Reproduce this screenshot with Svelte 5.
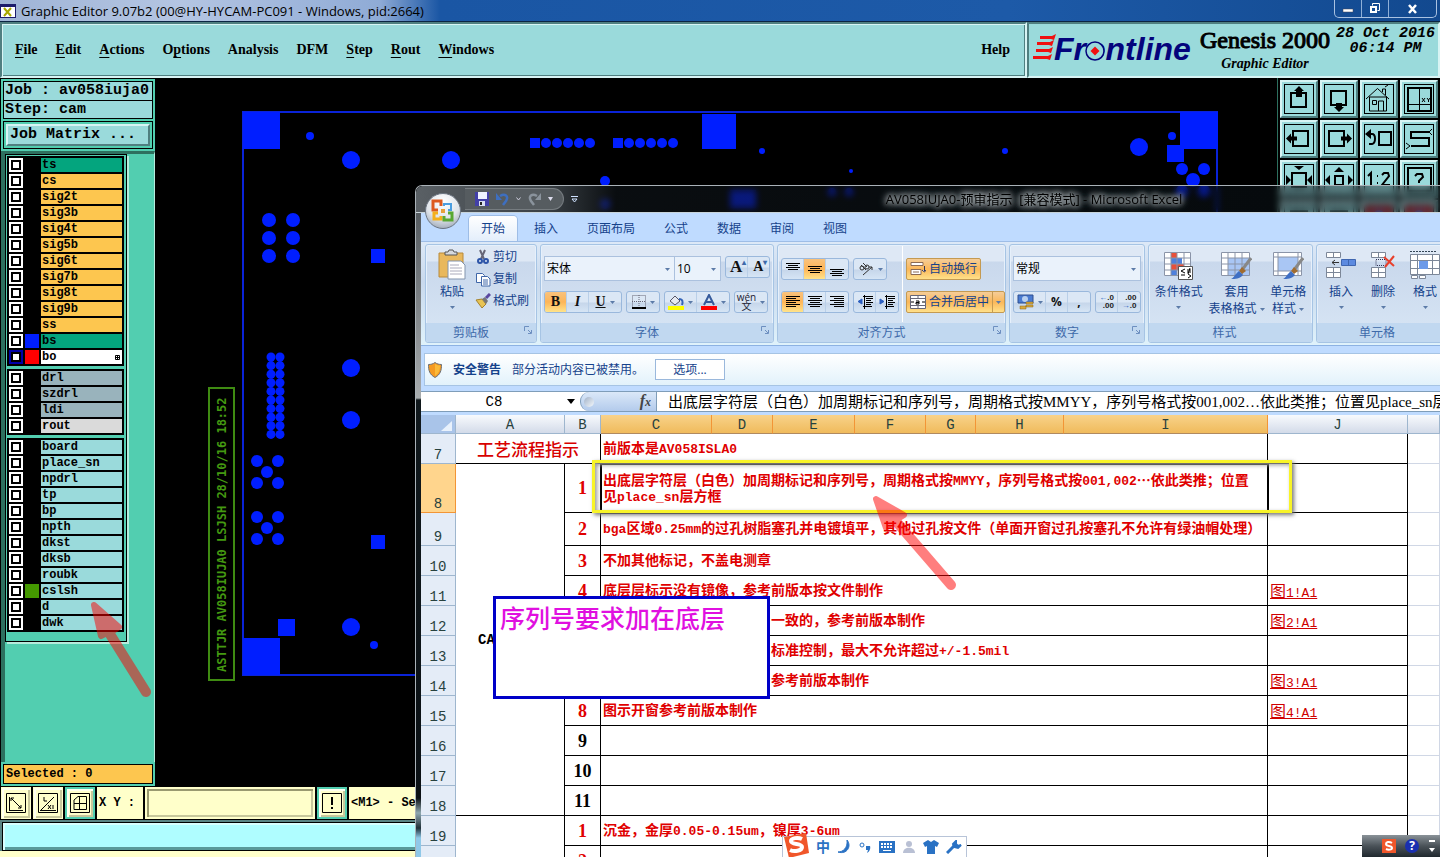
<script>
  const menus = [
    { key: 'F', rest: 'ile' },
    { key: 'E', rest: 'dit' },
    { key: 'A', rest: 'ctions' },
    { pre: 'O', key: 'p', rest: 'tions' },
    { rest: 'Analysis' },
    { rest: 'DFM' },
    { key: 'S', rest: 'tep' },
    { key: 'R', rest: 'out' },
    { key: 'W', rest: 'indows' },
  ];

  const layerGroups = [
    [
      { name: 'ts', kind: 'mask' },
      { name: 'cs', kind: 'signal' },
      { name: 'sig2t', kind: 'signal' },
      { name: 'sig3b', kind: 'signal' },
      { name: 'sig4t', kind: 'signal' },
      { name: 'sig5b', kind: 'signal' },
      { name: 'sig6t', kind: 'signal' },
      { name: 'sig7b', kind: 'signal' },
      { name: 'sig8t', kind: 'signal' },
      { name: 'sig9b', kind: 'signal' },
      { name: 'ss', kind: 'signal' },
      { name: 'bs', kind: 'mask', swatch: 'blue' },
      { name: 'bo', kind: 'plain', swatch: 'red', active: true },
    ],
    [
      { name: 'drl', kind: 'drill' },
      { name: 'szdrl', kind: 'drill' },
      { name: 'ldi', kind: 'drill' },
      { name: 'rout', kind: 'rout' },
    ],
    [
      { name: 'board', kind: 'misc' },
      { name: 'place_sn', kind: 'misc' },
      { name: 'npdrl', kind: 'misc' },
      { name: 'tp', kind: 'misc' },
      { name: 'bp', kind: 'misc' },
      { name: 'npth', kind: 'misc' },
      { name: 'dkst', kind: 'misc' },
      { name: 'dksb', kind: 'misc' },
      { name: 'roubk', kind: 'misc' },
      { name: 'cslsh', kind: 'misc', swatch: 'green' },
      { name: 'd', kind: 'misc' },
      { name: 'dwk', kind: 'misc' },
    ],
  ];

  // board pads: [cx, cy, r]
  const pads = [
    [310, 136, 4], [351, 160, 9], [451, 160, 9], [762, 151, 3], [605, 181, 5], [605, 204, 5],
    [851, 171, 2], [1005, 151, 3], [1139, 147, 9], [1172, 136, 4], [1182, 169, 6], [1204, 169, 6],
    [1193, 180, 7], [1182, 191, 6], [1204, 191, 6], [832, 192, 4], [849, 192, 4],
    [351, 368, 9], [351, 420, 9], [351, 627, 9], [374, 645, 4],
    ...[220, 238, 256].flatMap((y) => [[269, y, 7], [293, y, 7]]),
    ...[472, 528].flatMap((y) => [
      [257, y - 11, 6], [278, y - 11, 6], [267, y, 6], [257, y + 11, 6], [278, y + 11, 6],
    ]),
    ...[0, 1, 2, 3, 4].flatMap((i) => [[546 + i * 11, 143, 5], [629 + i * 11, 143, 5]]),
    ...Array.from({ length: 10 }, (_, i) => 357 + i * 8.6).flatMap((y) => [[271, y, 4.5], [280, y, 4.5]]),
  ];

  // square pads: [x, y, width, height]
  const squares = [
    [243, 112, 37, 37], [702, 114, 34, 35], [1180, 112, 38, 37], [243, 638, 37, 37],
    [1167, 145, 17, 17], [278, 619, 17, 17], [371, 249, 14, 14], [371, 535, 14, 14],
    [530, 138, 10, 10], [613, 138, 10, 10], [730, 190, 26, 18],
  ];

  const tools = ['up', 'down', 'home', 'xy', 'left', 'right', 'back', 'snake', 'in', 'out', 'half', 'help', 'fill', 'copy', 'stop', 'stop2'];

  const tabs = ['开始', '插入', '页面布局', '公式', '数据', '审阅', '视图'];

  const columns = ['A', 'B', 'C', 'D', 'E', 'F', 'G', 'H', 'I', 'J', ''];

  const rows = [
    { n: 8, no: '1', text: '出底层字符层（白色）加周期标记和序列号，周期格式按MMYY，序列号格式按001,002…依此类推；位置\n见place_sn层方框', tall: true },
    { n: 9, no: '2', text: 'bga区域0.25mm的过孔树脂塞孔并电镀填平，其他过孔按文件（单面开窗过孔按塞孔不允许有绿油帽处理）', mid: true },
    { n: 10, no: '3', text: '不加其他标记，不盖电测章' },
    { n: 11, no: '4', text: '底层层标示没有镜像，参考前版本按文件制作', link: '图1!A1' },
    { n: 12, no: '', text: '一致的，参考前版本制作', link: '图2!A1', tail: true },
    { n: 13, no: '', text: '标准控制，最大不允许超过+/-1.5mil', tail: true },
    { n: 14, no: '', text: '参考前版本制作', link: '图3!A1', tail: true },
    { n: 15, no: '8', text: '图示开窗参考前版本制作', link: '图4!A1' },
    { n: 16, no: '9', text: '', dark: true },
    { n: 17, no: '10', text: '', dark: true },
    { n: 18, no: '11', text: '', dark: true },
    { n: 19, no: '1', text: '沉金，金厚0.05-0.15um，镍厚3-6um' },
    { n: 20, no: '2', text: '' },
  ];

  function runs(text) {
    return text.split(/([\x20-\x7e]+)/).filter(Boolean);
  }

  const isLatin = (s) => /^[\x20-\x7e]/.test(s);
</script>

{#snippet mixed(text)}
  {#each runs(text) as run}{#if isLatin(run)}<span class="latin">{run}</span>{:else}{run}{/if}{/each}
{/snippet}

{#snippet caret()}
  <svg class="caret" width="5" height="3" viewBox="0 0 5 3"><path d="M0 0h5L2.5 3z" fill="#5c7ba8" /></svg>
{/snippet}

{#snippet launcher()}
  <button class="launcher" aria-label="More options">
    <svg width="8" height="8" viewBox="0 0 8 8" fill="none" stroke="#6d8fc0">
      <path d="M.5 5V.5H5M4 4l3 3" /><path d="M7.500 4v3.500H4" />
    </svg>
  </button>
{/snippet}

{#snippet lines(y, widths, x)}
  <svg width="16" height="16" viewBox="0 0 16 16" stroke="#000">
    {#each widths as w, i}
      <path d="M{x === 'l' ? 1 : x === 'r' ? 15 - w : 8 - w / 2} {y + i * 2 + 0.5}h{w}" />
    {/each}
  </svg>
{/snippet}

{#snippet tool(kind)}
  <svg width="32" height="32" viewBox="0 0 32 32" fill="none" stroke="#000" stroke-width="2">
    <rect x="1.5" y="1.5" width="29" height="29" stroke-width="1" />
    {#if kind === 'up'}
      <path d="M8 10h15v14H8z" /><path d="M16 3l5 5h-2v6h-6V8h-2z" fill="#000" stroke="none" />
    {:else if kind === 'down'}
      <path d="M8 8h15v14H8z" /><path d="M16 29l5-5h-2v-4h-6v4h-2z" fill="#000" stroke="none" />
    {:else if kind === 'left'}
      <path d="M10 8h15v15H10z" /><path d="M3 15.500l5-5v3h6v4H8v3z" fill="#000" stroke="none" />
    {:else if kind === 'right'}
      <path d="M6 8h15v15H6z" /><path d="M29 15.500l-5-5v3h-6v4h6v3z" fill="#000" stroke="none" />
    {:else if kind === 'home'}
      <g stroke-width="1"><path d="M3 16L14.500 5.500 26 16M6.500 14v14h17V14M6 14h18M9.500 17.500h4v4h-4zM15.500 28v-10h5v10M19.500 9V6h3v6M22 4l3-2" /></g>
    {:else if kind === 'xy'}
      <path d="M5 5h23v23H5z" /><path d="M16.500 5v23M5 21.500h23" stroke-width="1" />
      <path d="M19 15l3 4M22 15l-3 4M24 15l1.500 2 1.500-2M25.500 17v2" stroke-width="1" />
    {:else if kind === 'back'}
      <path d="M16 9h12v13H16zM4 11h5c4 0 4 9 0 10H6" /><path d="M8 6l-6 5 6 5z" fill="#000" stroke="none" />
    {:else if kind === 'snake'}
      <path d="M26 9H8v6h18v8H8" /><path d="M29 6l-3 3 3 3M3 20l4 3-4 3" stroke-width="1" />
    {:else if kind === 'in'}
      <path d="M9 10h14v14H9z" /><path d="M16 7l-5-4h10zM8 17l-5-5v10zM24 17l5-5v10z" fill="#000" stroke="none" />
    {:else if kind === 'out'}
      <path d="M12 13h8v9h-8z" /><path d="M16 4l-5 5h10zM2 17l5-5v10zM30 17l-5-5v10z" fill="#000" stroke="none" />
    {:else if kind === 'half'}
      <path d="M5 13l3-3v13M14 13h1M14 20h1M19 12l2-2h4l1 3-7 9h8" />
    {:else if kind === 'help'}
      <path d="M5 5h23v23H5zM12 13l2-2h5l1 3-4 4v2" />
    {:else if kind === 'fill' || kind === 'copy'}
      <path d="M8 8h16v16H8z" />
    {:else}
      <path d="M2 2h28v28H2z" fill="#a33b46" stroke="none" /><circle cx="16" cy="13" r="5" stroke="#4a6bd8" />
    {/if}
  </svg>
{/snippet}

<div class="desktop">
  <header class="title-bar">
    <svg width="16" height="14" viewBox="0 0 16 14">
      <path d="M0 0h16v14H0z" fill="#1c1c6c" /><path d="M1 3h14v10H1z" fill="#fff" />
      <path d="M4 4l7 8M11 4l-7 8" stroke="#a8a800" stroke-width="2" />
    </svg>
    <span class="title-text">Graphic Editor 9.07b2 (00@HY-HYCAM-PC091 - Windows, pid:2664)</span>
    <div class="caption-buttons">
      <button aria-label="Minimize"><svg width="12" height="10" viewBox="0 0 12 10"><path d="M1 5h10v3H1z" fill="#fff" stroke="#445" stroke-width=".5" /></svg></button>
      <button aria-label="Restore"><svg width="12" height="11" viewBox="0 0 12 11" fill="none" stroke="#fff"><path d="M3.500 2.500v-2h7v7h-2" /><path d="M2 4h5v5H2z" stroke-width="2" /></svg></button>
      <button class="close" aria-label="Close"><svg width="12" height="10" viewBox="0 0 12 10"><path d="M2 1l7 8M9 1L2 9" stroke="#fff" stroke-width="2.500" /></svg></button>
    </div>
  </header>

  <div class="top-row">
    <nav class="menu-bar">
      {#each menus as m}
        <button>{m.pre ?? ''}{#if m.key}<u>{m.key}</u>{/if}{m.rest}</button>
      {/each}
      <button class="help">Help</button>
    </nav>
    <div class="brand">
      <svg class="logo" width="162" height="34" viewBox="0 0 162 34" role="img" aria-label="Frontline">
        <path d="M7 3h12l4-2-2 6-3-1H7zM4 9h13l4-2-2 6-3-1H4zM3 16h13l4-2-2 6-3-1H3zM0 23h15l4-2-2 6-3-1H0z" fill="#f01010" />
        <text x="21" y="27" class="logo-text">Frontline</text>
        <circle cx="62" cy="18" r="9" fill="#9adadb" stroke="#04047c" stroke-width="1.5" />
        <path d="M62 13.500l4.500 4.500-4.500 4.500-4.500-4.500z" fill="#f01010" />
      </svg>
      <div class="product">
        <div class="product-name">Genesis 2000</div>
        <div class="product-sub">Graphic Editor</div>
      </div>
      <div class="clock">28 Oct 2016<br />06:14 PM</div>
    </div>
  </div>

  <div class="work-row">
    <aside class="sidebar">
      <div class="job-info">
        <div>Job : av058iuja0</div>
        <div>Step: cam</div>
      </div>
      <div class="matrix-frame"><button>Job Matrix ...</button></div>
      <div class="layer-area">
        <div class="layer-panel">
          {#each layerGroups as group}
            <div class="layer-group">
              {#each group as layer}
                <div class="layer">
                  <input type="checkbox" id="layer-{layer.name}" class:active={layer.active} />
                  <span class="swatch {layer.swatch ?? ''}"></span>
                  <label class={layer.kind} for="layer-{layer.name}">
                    {layer.name}
                    {#if layer.active}
                      <svg width="5" height="5" viewBox="0 0 5 5" fill="none" stroke="#000"><path d="M.5 .5h4v4h-4zM2.500 0v5M0 2.500h5" /></svg>
                    {/if}
                  </label>
                </div>
              {/each}
            </div>
          {/each}
        </div>
      </div>
      <div class="selected">Selected : 0</div>
    </aside>

    <main class="canvas">
      <svg width="1123" height="708" viewBox="155 78 1123 708">
        <g fill="#001eff">
          <rect x="243" y="112" width="974" height="563" fill="none" stroke="#0a23d8" stroke-width="2" />
          {#each squares as [x, y, width, height]}
            <rect {x} {y} {width} {height} />
          {/each}
          {#each pads as [cx, cy, r]}
            <circle {cx} {cy} {r} />
          {/each}
        </g>
        <rect x="209" y="388" width="25" height="292" fill="none" stroke="#3f8b12" stroke-width="2" />
        <text class="board-text" transform="translate(226 672) rotate(-90)">ASTTJR AV058IUJA0 LSJSH 28/10/16 18:52</text>
      </svg>
    </main>

    <div class="tool-grid">
      {#each tools as t}
        <button aria-label={t}>{@render tool(t)}</button>
      {/each}
    </div>
  </div>

  <div class="status-row">
    <button aria-label="Diagonal"><svg width="22" height="22" viewBox="0 0 22 22" fill="none" stroke="#000"><path d="M1.500 1.500h19v19h-19zM4.500 5v13M4 18.500h14M6 6l10 10M6 9V6h3M16 13v3h-3" /></svg></button>
    <button aria-label="Angle"><svg width="22" height="22" viewBox="0 0 22 22" fill="none" stroke="#000"><path d="M1.500 1.500h19v19h-19zM3 18.500h16M4 18L17 5M7 5v4h3M11 13l3 4M14 13l-3 4M16 13v4" /></svg></button>
    <button class="framed" aria-label="Grid"><svg width="22" height="22" viewBox="0 0 22 22" fill="none" stroke="#000"><path d="M1.500 1.500h19v19h-19zM5 17.500V8l4-3.500h8.500v13zM10.500 4v14M5 11.500h13" /></svg></button>
    <label for="xy">X Y :</label>
    <input id="xy" type="text" />
    <button class="framed" aria-label="Apply"><svg width="22" height="22" viewBox="0 0 22 22" fill="none" stroke="#000"><path d="M1.500 1.500h19v19h-19z" /><path d="M11 5v8M11 15v2" stroke-width="2" /></svg></button>
    <span class="hint">&lt;M1&gt; - Select</span>
  </div>
  <div class="message-bar"><div></div></div>

  <svg class="arrow" width="70" height="104" viewBox="0 0 70 104">
    <g opacity=".5" fill="#f00" stroke="#f00" stroke-linejoin="round" stroke-linecap="round">
      <path d="M8 6l25 22-6 4-8 3-4 2z" stroke-width="6" /><path d="M22 32l38 61" stroke-width="10" />
    </g>
  </svg>

  <section class="excel">
    <header class="excel-title">
      <button class="orb" aria-label="Office">
        <svg width="36" height="36" viewBox="0 0 36 36">
          <defs><radialGradient id="orb" cx=".5" cy=".25" r=".8"><stop offset="0" stop-color="#fff" /><stop offset=".6" stop-color="#dfe4ea" /><stop offset="1" stop-color="#9aa5b4" /></radialGradient></defs>
          <circle cx="18" cy="18" r="17.500" fill="url(#orb)" stroke="#6b7480" />
          <g fill="none" stroke-width="3">
            <path d="M16 13V8H8v9h5" stroke="#dd5a20" /><path d="M19 13v-2h7v6h-3" stroke="#4b9ee0" stroke-width="2" />
            <path d="M13 20H9v6h7v-3" stroke="#f4b01c" /><path d="M19 23v4h8v-7h-4" stroke="#58a832" />
          </g>
          <path d="M16 16h4v4h-4z" fill="#e7a13a" />
        </svg>
      </button>
      <div class="quick">
        <button aria-label="Save"><svg width="14" height="14" viewBox="0 0 14 14"><path d="M0 0h14v14H0z" fill="#4240a8" /><path d="M3 0h9v7H3z" fill="#eef2ff" /><path d="M4 9h6v5H4z" fill="#d8def0" /><path d="M5 10h2v3H5z" fill="#222" /></svg></button>
        <button aria-label="Undo"><svg width="13" height="14" viewBox="0 0 13 14"><path d="M4 4c5-3 9 0 6 5l-3 4" fill="none" stroke="#3e6fc0" stroke-width="2.500" /><path d="M0 1v7h6z" fill="#3e6fc0" /></svg></button>
        <svg width="5" height="4" viewBox="0 0 5 4"><path d="M.5 .5L2.500 3l2-2.500" fill="none" stroke="#ccd" /></svg>
        <button aria-label="Redo"><svg width="13" height="14" viewBox="0 0 13 14"><path d="M9 4C4 1 0 4 3 9l3 4" fill="none" stroke="#8a939c" stroke-width="2.500" /><path d="M13 1v7H7z" fill="#8a939c" /></svg></button>
        <svg width="5" height="4" viewBox="0 0 5 4"><path d="M0 0h5L2.500 4z" fill="#dde" /></svg>
      </div>
      <svg class="more" width="7" height="7" viewBox="0 0 7 7" fill="none" stroke="#cfe2ff"><path d="M0 .5h7M1 3l2.500 3L6 3z" /></svg>
      <span class="excel-name">AV058IUJA0-预审指示&nbsp; [兼容模式] - Microsoft Excel</span>
    </header>

    <div class="excel-body">
      <nav class="tabs">
        {#each tabs as tab, i}
          <button class:current={i === 0}>{tab}</button>
        {/each}
      </nav>

      <div class="ribbon">
        <div class="group clipboard">
          <div class="group-main">
            <button class="big">
              <svg width="28" height="32" viewBox="0 0 28 32">
                <path d="M1 4h24v24H1z" fill="#e9b85c" stroke="#b98a3a" /><path d="M7 5V3h3l1-2h4l1 2h3v3H7z" fill="#d5d9de" stroke="#555" />
                <path d="M10 12h13l4 4v14H10z" fill="#fff" stroke="#8294ad" /><path d="M12 16h9M12 19h12M12 22h12M12 25h12" stroke="#aab" />
              </svg>
              <span>粘贴</span>
              {@render caret()}
            </button>
            <div class="stack">
              <button><svg width="16" height="16" viewBox="0 0 16 16" fill="none"><path d="M5 1l4 9M10 1L6 10" stroke="#667" stroke-width="2" /><circle cx="5" cy="12" r="2" stroke="#2d54a8" stroke-width="2" /><circle cx="11" cy="12" r="2" stroke="#2d54a8" stroke-width="2" /></svg>剪切</button>
              <button><svg width="16" height="16" viewBox="0 0 16 16" fill="#fff" stroke="#3f66a8"><path d="M1.500 2.500h6l2 2v7h-8z" /><path d="M6.500 5.500h6l2.500 2.500v7H6.500zM8 9h5M8 11h5M8 13h5" /></svg>复制</button>
              <button><svg width="16" height="16" viewBox="0 0 16 16"><path d="M1 7l6-1 4 5-4 4z" fill="#e8c455" stroke="#a5822e" /><path d="M7 6l3-2 3 4-2 3z" fill="#777" /><path d="M11 5l4-4" stroke="#5a48a0" stroke-width="3" /></svg>格式刷</button>
            </div>
          </div>
          <div class="group-label"><span>剪贴板</span>{@render launcher()}</div>
        </div>

        <div class="group font">
          <div class="group-main rows">
            <div class="line">
              <div class="combos">
                <label class="combo family"><select aria-label="Font"><option>宋体</option></select>{@render caret()}</label>
                <label class="combo size"><select aria-label="Font size"><option>10</option></select>{@render caret()}</label>
              </div>
              <div class="cluster">
                <button class="letter grow">A<sup>▴</sup></button><button class="letter shrink">A<sup>▾</sup></button>
              </div>
            </div>
            <div class="line">
              <div class="cluster">
                <button class="letter on">B</button><button class="letter italic">I</button><button class="letter wide"><u>U</u>{@render caret()}</button>
              </div>
              <div class="cluster">
                <button class="wide" aria-label="Borders"><svg width="14" height="14" viewBox="0 0 14 14"><path d="M.5 .5h13v12H.5zM7 0v13M0 6.500h14" fill="none" stroke="#667" stroke-dasharray="1 1" /><path d="M0 13h14" stroke="#000" stroke-width="2" /></svg>{@render caret()}</button>
              </div>
              <div class="cluster">
                <button class="wide" aria-label="Fill colour"><svg width="16" height="16" viewBox="0 0 16 16"><path d="M2 7l5-5 5 5-5 4z" fill="#e6eaf2" stroke="#556" /><path d="M11 5c4 0 4 3 3 6" fill="none" stroke="#3565b8" stroke-width="2" /><path d="M0 12h16v4H0z" fill="#ff0" /></svg>{@render caret()}</button>
                <button class="wide" aria-label="Font colour"><svg width="16" height="16" viewBox="0 0 16 16"><path d="M3 11L8 1l5 10M5 8h6" fill="none" stroke="#355a9c" stroke-width="2" /><path d="M0 12h16v4H0z" fill="#f00" /></svg>{@render caret()}</button>
              </div>
              <div class="cluster">
                <button class="wide phonetic"><span>wén<br />文</span>{@render caret()}</button>
              </div>
            </div>
          </div>
          <div class="group-label"><span>字体</span>{@render launcher()}</div>
        </div>

        <div class="group align">
          <div class="group-main split">
            <div class="align-col">
              <div class="line">
                <div class="cluster">
                  <button aria-label="Top">{@render lines(2, [14, 10, 14, 10], 'c')}</button><button class="on" aria-label="Middle">{@render lines(5, [14, 10, 14, 10], 'c')}</button><button aria-label="Bottom">{@render lines(8, [14, 10, 14, 10], 'c')}</button>
                </div>
                <div class="cluster">
                  <button class="wide" aria-label="Orientation"><svg width="16" height="16" viewBox="0 0 16 16" fill="none" stroke="#333"><circle cx="4" cy="7" r="2" /><path d="M3 4l5 5" /><circle cx="9" cy="6" r="2" /><path d="M5 2l4 4M5 14L14 6M14 9V6h-3" /></svg>{@render caret()}</button>
                </div>
              </div>
              <div class="line">
                <div class="cluster">
                  <button class="on" aria-label="Align left">{@render lines(2, [14, 10, 14, 10, 14, 10], 'l')}</button><button aria-label="Center">{@render lines(2, [14, 10, 14, 10, 14, 10], 'c')}</button><button aria-label="Align right">{@render lines(2, [14, 10, 14, 10, 14, 10], 'r')}</button>
                </div>
                <div class="cluster">
                  <button aria-label="Decrease indent"><svg width="16" height="16" viewBox="0 0 16 16" stroke="#000"><path d="M6 2.500h10M9 4.500h7M9 6.500h5M9 8.500h7M9 10.500h5M6 12.500h9M7.500 1v14" /><path d="M5 5L1 7.500 5 10z" fill="#2d5fc0" stroke="#2d5fc0" /></svg></button><button aria-label="Increase indent"><svg width="16" height="16" viewBox="0 0 16 16" stroke="#000"><path d="M6 2.500h10M9 4.500h7M9 6.500h5M9 8.500h7M9 10.500h5M6 12.500h9M7.500 1v14" /><path d="M1 5l4 2.500L1 10z" fill="#2d5fc0" stroke="#2d5fc0" /></svg></button>
                </div>
              </div>
            </div>
            <div class="align-col divided">
              <button class="gold"><svg width="16" height="16" viewBox="0 0 16 16" fill="#fff" stroke="#8a6a54"><path d="M1 1.500h12v3H1zM1 8.500h10v5H1zM3 11h6" /><path d="M14.500 5v5M12 9l2.500 2L16 9" stroke="#335" /></svg>自动换行</button>
              <button class="gold"><svg width="16" height="16" viewBox="0 0 16 16" fill="#fff" stroke="#667"><path d="M.5 1.500h15v13H.5zM8 1v3M8 12v3M0 4.500h16M0 11.500h16" /><path d="M4 8H1M12 8h3M6 7h3v3H6V8.500h3" stroke="#000" /></svg>合并后居中<i></i>{@render caret()}</button>
            </div>
          </div>
          <div class="group-label"><span>对齐方式</span>{@render launcher()}</div>
        </div>

        <div class="group number">
          <div class="group-main rows">
            <div class="line">
              <label class="combo format"><select aria-label="Number format"><option>常规</option></select>{@render caret()}</label>
            </div>
            <div class="line">
              <div class="cluster">
                <button class="wide" aria-label="Currency"><svg width="17" height="16" viewBox="0 0 17 16"><path d="M1 1h15v8H1z" fill="#4a7bd0" stroke="#2d4f90" /><circle cx="8" cy="5" r="3" fill="#b8d0f0" /><path d="M9 8h7v2H9zM9 11h7v2H9zM3 12h6v3H3z" fill="#d8a93c" stroke="#8a6518" stroke-width=".5" /></svg>{@render caret()}</button><button class="sign">%</button><button class="sign">,</button>
              </div>
              <div class="cluster">
                <button class="decimal"><span><b>←</b>.0<br />.00</span></button><button class="decimal"><span>.00<br /><b>→</b>.0</span></button>
              </div>
            </div>
          </div>
          <div class="group-label"><span>数字</span>{@render launcher()}</div>
        </div>

        <div class="group styles">
          <div class="group-main">
            <button class="big">
              <svg width="32" height="32" viewBox="0 0 32 32"><path d="M1 3h27v24H1z" fill="#fff" /><path d="M8 3h6v6H8zM8 15h6v6H8z" fill="#e8503a" /><path d="M8 9h11v6H8zM8 21h6v6H8z" fill="#4f80dc" /><path d="M14 15h7v6h-7z" fill="#e8503a" /><path d="M1.500 3.500h26v23h-26zM8 3v24M14 3v24M21 3v24M1 9h27M1 15h27M1 21h27" fill="none" stroke="#8a94a8" /><path d="M15.500 17.500h14v13h-14z" fill="#fff" stroke="#555" /><path d="M22 20l-4 2 4 2M18 26h4M24 21h4M24 23h4M27 19l-2 6M25 25l3 2-3 2" fill="none" stroke="#000" /></svg>
              <span>条件格式</span>{@render caret()}
            </button>
            <button class="big">
              <svg width="32" height="32" viewBox="0 0 32 32"><path d="M1 3h29v24H1z" fill="#fff" /><path d="M8 9h22v18H8z" fill="#a9c6f4" /><path d="M1.500 3.500h28v23h-28zM8 3v24M15 3v24M22 3v24M1 9h29M1 15h29M1 21h29" fill="none" stroke="#8a94a8" /><path d="M31 9l-9 12" stroke="#888" stroke-width="3" /><path d="M22 18l4 4-4 3-3-3z" fill="#a06c30" /><path d="M19 22l4 4c-3 4-8 4-12 4 3-1 4-5 8-8z" fill="#3f6fc4" /></svg>
              <span>套用<br />表格格式 {@render caret()}</span>
            </button>
            <button class="big">
              <svg width="32" height="32" viewBox="0 0 32 32"><path d="M1 3h29v24H1z" fill="#fff" /><path d="M6 8h20v14H6z" fill="#a9c6f4" /><path d="M1.500 3.500h28v23h-28zM6 3v24M26 3v24M1 8h29M1 22h29" fill="none" stroke="#8a94a8" /><path d="M31 9l-9 12" stroke="#888" stroke-width="3" /><path d="M22 18l4 4-4 3-3-3z" fill="#a06c30" /><path d="M19 22l4 4c-3 4-8 4-12 4 3-1 4-5 8-8z" fill="#3f6fc4" /></svg>
              <span>单元格<br />样式 {@render caret()}</span>
            </button>
          </div>
          <div class="group-label"><span>样式</span></div>
        </div>

        <div class="group cells">
          <div class="group-main">
            <button class="big">
              <svg width="32" height="32" viewBox="0 0 32 32" fill="#fff" stroke="#7c8798"><path d="M1.500 3.500h14v5h-14zM8.500 3v6M1.500 18.500h14v10h-14zM8.500 18v11M1 23.500h15" /><path d="M16.500 10.500h14v6h-14zM23.500 10v7" fill="#5c8ae0" stroke="#3f66b0" /><path d="M7 13.500h7M10 11l-3 2.500 3 2.500" fill="none" stroke="#333" /></svg>
              <span>插入</span>{@render caret()}
            </button>
            <button class="big">
              <svg width="32" height="32" viewBox="0 0 32 32" fill="#fff" stroke="#7c8798"><path d="M4.500 3.500h14v5h-14zM11.500 3v6M4.500 18.500h14v10h-14zM11.500 18v11M4 23.500h15" /><path d="M9 10.500h10v6H9z" fill="none" stroke-dasharray="1 1" stroke="#335" /><path d="M17 8l10 9M27 7l-9 11" stroke="#e8402c" stroke-width="2" /></svg>
              <span>删除</span>{@render caret()}
            </button>
            <button class="big">
              <svg width="32" height="32" viewBox="0 0 32 32" fill="#fff" stroke="#7c8798"><path d="M1.500 5.500h29v20h-29zM8.500 5v20M23.500 5v20M1 11.500h30M1 19.500h30M2.500 26.500h6v3h-6zM10.500 26.500h6v3h-6z" /><path d="M10 12h9v8h-9z" fill="#6c9ae8" stroke="none" /><path d="M1 2.500h27" stroke="#345" stroke-dasharray="2 1" /></svg>
              <span>格式</span>{@render caret()}
            </button>
          </div>
          <div class="group-label"><span>单元格</span></div>
        </div>
      </div>

      <div class="security">
        <svg width="14" height="16" viewBox="0 0 14 16"><path d="M7 .5c2 1.500 4 2 6.500 2 0 6-1 10-6.500 13C1.500 12.500.5 8.500.5 2.500 3 2.500 5 2 7 .5z" fill="#f59a22" stroke="#6a7078" /><path d="M7 2v12c4-3 5-6 5-10.500C10 3.500 8.500 3 7 2z" fill="#ffd24a" opacity=".6" /></svg>
        <strong>安全警告</strong>
        <span>部分活动内容已被禁用。</span>
        <button>选项...</button>
      </div>

      <div class="formula-bar">
        <div class="name-box"><input aria-label="Name box" value="C8" /><svg width="8" height="5" viewBox="0 0 8 5"><path d="M0 0h8L4 5z" /></svg></div>
        <div class="fx"><i></i><em>f<small>x</small></em></div>
        <input class="formula" aria-label="Formula" value="出底层字符层（白色）加周期标记和序列号，周期格式按MMYY，序列号格式按001,002…依此类推；位置见place_sn层方框" />
      </div>

      <table class="sheet">
        <colgroup>
          <col class="w-head" /><col class="w-a" /><col class="w-b" /><col class="w-c" /><col class="w-d" /><col class="w-e" /><col class="w-f" /><col class="w-g" /><col class="w-h" /><col class="w-i" /><col class="w-j" /><col />
        </colgroup>
        <thead>
          <tr>
            <th class="corner"><svg width="11" height="10" viewBox="0 0 11 10"><path d="M11 0v10H0z" fill="#e8f1fc" /></svg></th>
            {#each columns as c}
              <th class:picked={c >= 'C' && c <= 'I'}>{c}</th>
            {/each}
          </tr>
        </thead>
        <tbody>
          <tr>
            <th>7</th>
            <td colspan="2" class="process">工艺流程指示</td>
            <td colspan="7" class="note">{@render mixed('前版本是AV058ISLA0')}</td>
            <td></td>
            <td class="outside"></td>
          </tr>
          {#each rows as r}
            <tr class:tall={r.tall} class:mid={r.mid}>
              <th class:picked={r.tall}>{r.n}</th>
              {#if r.n === 8}<td rowspan="11" class="cam">CA</td>{/if}
              {#if r.n === 19}<td rowspan="2"></td>{/if}
              <td class="no" class:dark={r.dark}>{r.no}</td>
              <td colspan="7" class="note" class:tail={r.tail} class:cursor={r.tall}>{@render mixed(r.text)}</td>
              <td class="ref">{#if r.link}<a href="#{r.link}">{@render mixed(r.link)}</a>{/if}</td>
              <td class="outside"></td>
            </tr>
          {/each}
        </tbody>
      </table>
    </div>
  </section>

  <div class="highlight"></div>
  <div class="callout">序列号要求加在底层</div>
  <svg class="arrow second" width="100" height="108" viewBox="0 0 100 108">
    <g opacity=".5" fill="#f00" stroke="#f00" stroke-linejoin="round" stroke-linecap="round">
      <path d="M11 10l28 16-8 5-10 8z" stroke-width="6" /><path d="M29 30l57 66" stroke-width="10" />
    </g>
  </svg>

  <div class="ime">
    <svg class="sogou" width="28" height="26" viewBox="0 0 28 26"><path d="M2 5L24 1l3 20-20 5z" fill="#f0562a" /><path d="M20 7c-4-2-11-1-11 2 0 4 11 2 11 6 0 4-8 5-12 3" fill="none" stroke="#fff" stroke-width="4" /></svg>
    <span>中</span>
    <svg width="14" height="14" viewBox="0 0 14 14"><path d="M10 0c5 6 0 15-9 12 5 0 10-4 9-12z" fill="#2a72c4" stroke="#2a72c4" /></svg>
    <svg width="14" height="14" viewBox="0 0 14 14"><circle cx="4" cy="5" r="2" fill="none" stroke="#2a72c4" /><path d="M8 6h4c1 3-1 6-3 7l1-3H8z" fill="#2a72c4" /></svg>
    <svg width="16" height="12" viewBox="0 0 16 12"><path d="M0 0h16v12H0z" fill="#2a72c4" /><path d="M2 3h12M2 6h12" stroke="#fff" stroke-width="2" stroke-dasharray="2 1" /><path d="M4 9.500h8" stroke="#fff" /></svg>
    <svg width="14" height="14" viewBox="0 0 14 14" fill="#b9c0d4"><circle cx="7" cy="4" r="3" /><path d="M1 13c0-7 12-7 12 0z" /></svg>
    <svg width="16" height="14" viewBox="0 0 16 14"><path d="M5 0l3 2 3-2 5 3-2 4-2-1v8H4V6L2 7 0 3z" fill="#2a72c4" /></svg>
    <svg width="16" height="14" viewBox="0 0 16 14"><path d="M1 13l7-7" stroke="#2a72c4" stroke-width="3" /><path d="M10 1L7 4l1 3 4 1 3-3-3 1-2-2z" fill="#2a72c4" stroke="#2a72c4" stroke-width="2" /></svg>
  </div>

  <div class="tray">
    <svg width="14" height="14" viewBox="0 0 14 14"><path d="M0 0h14v14H0z" fill="#f0562a" /><path d="M10 4C7 2 4 3 4 5c0 3 6 1 6 4 0 2-4 2-6 1" fill="none" stroke="#fff" stroke-width="2" /></svg>
    <span class="question">?</span>
    <svg width="8" height="14" viewBox="0 0 8 14"><path d="M1 1h6v2H1zM1 9h6l-3 4z" fill="#fff" /></svg>
  </div>
</div>

<style>
  :global(body) {
    background: #000;
  }

  .desktop {
    --aqua: #9adadb;
    --green: #52ceb0;
    --cream: #ffffca;
    --ui: 'Open Sans', 'Noto Sans CJK SC', sans-serif;
    --mono: 'Liberation Mono', 'Noto Sans CJK SC', monospace;
    position: relative;
    height: 100vh;
    overflow: hidden;
    display: flex;
    flex-direction: column;
    background: #000;
    font-family: var(--ui);
    font-size: 12px;
    line-height: 16px;
  }

  .desktop * {
    box-sizing: border-box;
  }

  button,
  input,
  select {
    font: inherit;
    color: inherit;
    margin: 0;
    padding: 0;
    border: 0;
    background: none;
    outline: 0;
  }

  svg {
    display: block;
    flex: none;
  }

  /* editor window */
  .title-bar {
    height: 22px;
    flex: none;
    display: flex;
    align-items: center;
    gap: 5px;
    background: linear-gradient(90deg, #9fb4d6 0, #b4c5e2 180px, #8fabd6 380px, #1a56a4 440px, #1d5aa8 70%, #12498f);
    border-bottom: 1px solid #0b2442;
  }

  .title-text {
    font-size: 13px;
    white-space: nowrap;
  }

  .caption-buttons {
    display: flex;
    align-self: flex-start;
    height: 18px;
    margin-left: auto;
    margin-right: 3px;
    border: 1px solid #a9c2e2;
    border-top: 0;
    border-radius: 0 0 5px 5px;
  }

  .caption-buttons button {
    width: 27px;
    display: grid;
    place-items: center;
    border-right: 1px solid #8fb0d8;
  }

  .caption-buttons .close {
    width: 47px;
    border-right: 0;
  }

  .top-row {
    display: flex;
    height: 56px;
    flex: none;
    background: #3f7f7f;
  }

  .menu-bar,
  .brand {
    background: var(--aqua);
    border: 2px solid;
    border-color: #4f7f80 #d8f4f4 #d8f4f4 #4f7f80;
    display: flex;
    align-items: center;
  }

  .menu-bar {
    flex: 1;
    gap: 18px;
    padding: 0 15px 0 13px;
    box-shadow: inset 1px 1px #d8f4f4, inset -1px -1px #4f7f80;
    font: bold 14px/18px 'Liberation Serif', serif;
  }

  .menu-bar u {
    text-underline-offset: 3px;
  }

  .help {
    margin-left: auto;
  }

  .brand {
    width: 413px;
    padding: 0 2px 0 4px;
    gap: 2px;
  }

  .logo {
    overflow: visible;
  }

  .logo-text {
    font: italic bold 32px 'Liberation Sans', sans-serif;
    fill: #04047c;
  }

  .product {
    width: 136px;
    text-align: center;
    font-family: 'Liberation Serif', serif;
    white-space: nowrap;
  }

  .product-name {
    font-size: 24px;
    line-height: 28px;
    -webkit-text-stroke: 1px #000;
  }

  .product-sub {
    font: italic bold 14px/20px 'Liberation Serif', serif;
  }

  .clock {
    flex: 1;
    align-self: flex-start;
    padding-top: 2px;
    text-align: center;
    white-space: nowrap;
    font: italic bold 15px/15px 'Liberation Mono', monospace;
  }

  .work-row {
    flex: 1;
    min-height: 0;
    display: flex;
  }

  .sidebar {
    width: 155px;
    flex: none;
    display: flex;
    flex-direction: column;
    border-left: 1px solid #000;
    border-top: 1px solid #000;
    background: var(--green);
    font-family: var(--mono);
    font-weight: bold;
  }

  .job-info {
    margin: 2px 2px 0;
    border: 1px solid #000;
    border-top: 0;
    font-size: 15px;
  }

  .job-info div {
    height: 19px;
    line-height: 18px;
    padding: 0 1px;
    border-top: 1px solid #000;
    background: var(--aqua);
    white-space: nowrap;
    overflow: hidden;
  }

  .job-info div + div {
    height: 18px;
  }

  .matrix-frame {
    margin: 2px 2px;
    padding: 2px;
    border: 1px solid #000;
  }

  .matrix-frame button {
    width: 100%;
    height: 22px;
    padding: 0 2px;
    text-align: left;
    font-size: 15px;
    background: var(--aqua);
    border: 2px solid;
    border-color: #d8f4f4 #4f7f80 #4f7f80 #d8f4f4;
  }

  .layer-area {
    flex: 1;
    border: solid #2d705f;
    border-width: 3px 0 0 4px;
    border-right: 1px solid #b5ecdc;
  }

  .layer-panel {
    width: 122px;
    padding: 1px 2px 9px 1px;
    display: grid;
    gap: 3px;
    border: 1px solid #000;
    box-shadow: 2px 2px #b5ecdc;
  }

  .layer-group {
    background: #000;
    padding: 2px 2px 0;
  }

  .layer {
    height: 16px;
    padding-bottom: 2px;
    display: flex;
    gap: 2px;
  }

  .layer input {
    appearance: none;
    width: 14px;
    height: 14px;
    border: 2px solid #fff;
    background: #fff;
    box-shadow: inset 0 0 0 2px #000;
  }

  .layer input.active {
    border-color: #0000a8;
  }

  .swatch {
    width: 14px;
  }

  .blue {
    background: #001eff;
  }

  .red {
    background: #f00;
  }

  .green {
    background: #449900;
  }

  .layer label {
    flex: 1;
    display: flex;
    align-items: center;
    justify-content: space-between;
    padding: 0 2px 0 1px;
    line-height: 14px;
  }

  .mask {
    background: #04a57e;
  }

  .signal {
    background: #fdc64f;
  }

  .plain {
    background: #fff;
  }

  .drill {
    background: #99b3bc;
  }

  .rout {
    background: #dadada;
  }

  .misc {
    background: var(--aqua);
  }

  .selected {
    margin: 2px;
    padding: 0 2px;
    height: 20px;
    line-height: 18px;
    background: #fdc64f;
    border: 1px solid #000;
  }

  .canvas {
    flex: 1;
    min-width: 0;
    overflow: hidden;
  }

  .board-text {
    font: bold 12px 'DejaVu Sans Mono', monospace;
    fill: #449911;
  }

  .tool-grid {
    width: 163px;
    flex: none;
    padding: 2px;
    border-left: 1px solid #2d705f;
    display: grid;
    grid-template-columns: repeat(4, 38px);
    grid-auto-rows: 38px;
    gap: 2px;
  }

  .tool-grid button {
    padding: 1px;
    background: var(--aqua);
    border: 2px solid;
    border-color: #d8f4f4 #4f7f80 #4f7f80 #d8f4f4;
  }

  .status-row {
    flex: none;
    display: flex;
    gap: 2px;
    height: 34px;
    padding: 1px 0 1px 1px;
    font: bold 12px/16px var(--mono);
  }

  .status-row button {
    width: 30px;
    padding: 2px;
    display: grid;
    place-items: center;
    background: var(--cream);
    border: 1px solid var(--cream);
    box-shadow: inset 2px 2px #fffff0, inset -2px -2px #c8c89c;
  }

  .status-row .framed {
    border: 2px solid var(--green);
    padding: 1px;
  }

  .status-row label {
    width: 46px;
    padding-left: 2px;
    display: flex;
    align-items: center;
    background: var(--cream);
    white-space: nowrap;
  }

  .status-row input {
    width: 170px;
    background: var(--cream);
    border: 2px solid var(--cream);
    box-shadow: inset 2px 2px #9a9a70, inset -2px -2px #c8c89c;
  }

  .hint {
    flex: 1;
    padding: 8px 2px;
    background: var(--cream);
    white-space: nowrap;
  }

  .message-bar {
    flex: none;
    padding: 2px 0 6px 2px;
    background: linear-gradient(#5a8484 31px, var(--cream) 31px);
  }

  .message-bar div {
    height: 29px;
    background: #affdff;
    border: solid #000;
    border-width: 1px 0 1px 1px;
    box-shadow: inset 2px 2px #d8ffff, inset 0 -3px #5a9a9a;
  }

  .arrow {
    position: absolute;
    left: 86px;
    top: 599px;
    pointer-events: none;
  }

  .arrow.second {
    left: 865px;
    top: 489px;
  }

  /* spreadsheet window */
  .excel {
    position: absolute;
    inset: 185px 0 0 415px;
    display: flex;
    flex-direction: column;
    padding-left: 5px;
    border-top: 1px solid #aab2b8;
    border-left: 1px solid #aab2b8;
    border-radius: 7px 0 0 0;
    overflow: hidden;
    background: linear-gradient(#555b60, #a8acae 185px, #10181c 187px, #0a1014 585px, #8fa8b0 600px, #203038 615px, #8fc8e8 625px) 0 27px / 6px 100% no-repeat;
    color: #15428b;
  }

  .excel-title {
    position: relative;
    z-index: 1;
    height: 27px;
    flex: none;
    display: flex;
    align-items: center;
    margin-left: -5px;
    backdrop-filter: blur(3px);
    background: linear-gradient(90deg, #5a6065 0, #3a4045 130px, rgba(16, 22, 27, .6) 200px, rgba(12, 20, 26, .5) 860px, rgba(12, 20, 26, .4));
    border-bottom: 1px solid #c8d4da;
  }

  .orb {
    position: absolute;
    left: 9px;
    top: 7px;
  }

  .quick {
    display: flex;
    align-items: center;
    gap: 7px;
    height: 22px;
    margin-left: 49px;
    padding: 0 10px;
    border: 1px solid #767c80;
    border-left: 0;
    border-radius: 0 11px 11px 0;
    background: #565c60;
  }

  .more {
    margin-left: 7px;
  }

  .excel-name {
    margin: 0 auto;
    padding-left: 50px;
    color: #000;
    font-size: 13px;
    white-space: nowrap;
    text-shadow: 0 0 4px #a8b0b4, 0 0 6px #a8b0b4, 0 0 8px #a8b0b4, 0 0 10px #a8b0b4;
  }

  .excel-body {
    flex: 1;
    min-height: 0;
    overflow: hidden;
    background: #bfdbff;
  }

  .tabs {
    display: flex;
    gap: 5px;
    height: 28px;
    padding: 3px 0 0 48px;
  }

  .tabs button {
    padding: 0 12px;
    white-space: nowrap;
  }

  .tabs .current {
    background: linear-gradient(#fff, #e3eefb);
    border-radius: 4px 4px 0 0;
    box-shadow: 0 0 0 1px #9ebde6;
    clip-path: inset(-1px -1px 0 -1px);
  }

  .ribbon {
    display: flex;
    gap: 3px;
    height: 105px;
    padding: 2px 0 2px 4px;
    background: linear-gradient(#dde9f7, #c9d9ed 40px, #dff2fb);
    border-top: 1px solid #9ebde6;
    border-bottom: 1px solid #8db2e3;
  }

  .group {
    flex: none;
    display: flex;
    flex-direction: column;
    overflow: hidden;
    border: 1px solid #a6c4e4;
    border-radius: 3px;
    background: linear-gradient(#dee8f5 16px, #c9d8ec 17px, #d8e6f5);
    box-shadow: inset 0 0 0 1px #e6f0fb;
  }

  .clipboard {
    width: 112px;
  }

  .font {
    width: 234px;
  }

  .align {
    width: 229px;
  }

  .number {
    width: 136px;
  }

  .styles {
    width: 165px;
  }

  .cells {
    width: 134px;
  }

  .group-main {
    flex: 1;
    display: flex;
    padding: 1px 3px;
  }

  .group-main.rows {
    flex-direction: column;
    gap: 10px;
    padding-top: 11px;
  }

  .group-label {
    height: 19px;
    flex: none;
    display: flex;
    align-items: center;
    padding-right: 4px;
    background: #c1d8f0;
    color: #3e6aaa;
  }

  .group-label span {
    flex: 1;
    padding-right: 8px;
    text-align: center;
  }

  .launcher {
    padding-bottom: 5px;
  }

  .big {
    flex: 1 1 auto;
    display: flex;
    flex-direction: column;
    align-items: center;
    gap: 2px;
    padding-top: 3px;
    white-space: nowrap;
  }

  .clipboard .big {
    flex: none;
    width: 46px;
  }

  .big span {
    line-height: 17px;
  }

  .big > .caret {
    margin-top: 4px;
  }

  .big span .caret {
    display: inline-block;
    vertical-align: middle;
  }

  .stack {
    display: grid;
    grid-auto-rows: 22px;
    align-content: start;
  }

  .stack button {
    display: flex;
    align-items: center;
    gap: 2px;
    white-space: nowrap;
  }

  .line {
    display: flex;
    gap: 4px;
  }

  .combos {
    display: flex;
  }

  .combo {
    position: relative;
    height: 25px;
    background: #eaf2fb;
    border: 1px solid #abc1de;
    color: #000;
  }

  .combo + .combo {
    border-left: 0;
  }

  .combo select {
    appearance: none;
    width: 100%;
    height: 100%;
    padding: 0 2px;
  }

  .combo .caret {
    position: absolute;
    right: 4px;
    top: 11px;
  }

  .family {
    width: 131px;
  }

  .size {
    width: 46px;
  }

  .format {
    width: 128px;
  }

  .cluster {
    display: flex;
    height: 22px;
    border: 1px solid #9ab8dc;
    border-radius: 3px;
    overflow: hidden;
    background: linear-gradient(#dbe7f5 10px, #c6d6ea 11px, #d6e5f5);
  }

  .cluster button {
    width: 22px;
    display: flex;
    align-items: center;
    justify-content: center;
    gap: 4px;
    border-right: 1px solid #b9cfe8;
  }

  .cluster button:last-child {
    border-right: 0;
  }

  .cluster .wide {
    width: 32px;
  }

  .cluster .on {
    background: linear-gradient(#f9c27d, #fdb558 10px, #ffe38a);
  }

  .letter {
    font: bold 14px/18px 'Liberation Serif', serif;
    color: #111;
  }

  .letter sup {
    font-size: 8px;
    line-height: 8px;
    margin: -8px -4px 0;
    color: #3e6aaa;
  }

  .grow {
    font-size: 17px;
  }

  .italic {
    font-style: italic;
  }

  .phonetic span {
    font-size: 10px;
    line-height: 9px;
    color: #223;
  }

  .split {
    gap: 3px;
  }

  .align-col {
    display: flex;
    flex-direction: column;
    gap: 11px;
    padding-top: 12px;
  }

  .divided {
    border-left: 1px solid #fff;
    padding-left: 3px;
    align-items: flex-start;
  }

  .gold {
    height: 22px;
    display: flex;
    align-items: center;
    gap: 3px;
    padding: 0 3px;
    white-space: nowrap;
    border: 1px solid #c49a52;
    border-radius: 2px;
    background: linear-gradient(#f5cd98, #fbb85a 10px, #ffe08a);
  }

  .gold i {
    align-self: stretch;
    border-left: 1px solid #c49a52;
  }

  .sign {
    color: #111;
    font-weight: bold;
  }

  .decimal span {
    font: bold 8px/8px 'Liberation Sans', sans-serif;
    color: #222;
    text-align: right;
  }

  .decimal b {
    color: #2d5fc0;
  }

  .security {
    display: flex;
    align-items: center;
    gap: 11px;
    height: 33px;
    margin: 7px 0 5px 3px;
    padding-left: 3px;
    border: 1px solid #a6c4e4;
    border-right: 0;
    background: linear-gradient(#fff, #e2f2fb);
    white-space: nowrap;
  }

  .security button {
    width: 70px;
    height: 21px;
    border: 1px solid #9ab8dc;
    background: #fff;
  }

  .formula-bar {
    display: flex;
    height: 21px;
    margin-bottom: 3px;
    border: 1px solid #7f9db9;
    border-width: 1px 0;
    background: #fff;
    color: #000;
  }

  .name-box {
    width: 159px;
    display: flex;
    align-items: center;
    padding-right: 5px;
    font-family: var(--mono);
    font-size: 14px;
  }

  .name-box input {
    flex: 1;
    min-width: 0;
    text-align: center;
  }

  .fx {
    width: 77px;
    display: flex;
    align-items: center;
    justify-content: space-between;
    padding: 0 5px 0 3px;
    border: 1px solid #7f9db9;
    border-width: 0 1px;
    border-radius: 9px 0 0 9px;
    background: linear-gradient(#dbe8f8, #b3cbec);
    color: #444;
    font: bold 16px/18px 'Liberation Serif', serif;
  }

  .fx i {
    width: 10px;
    height: 10px;
    border-radius: 5px;
    background: linear-gradient(135deg, #a2b2c8, #f4f8fc);
  }

  .fx small {
    font-size: 12px;
  }

  .formula {
    flex: 1;
    min-width: 0;
    padding-left: 11px;
    font: 15px/18px 'Liberation Serif', 'Noto Sans CJK SC', serif;
  }

  .sheet {
    width: 100%;
    table-layout: fixed;
    border-collapse: separate;
    border-spacing: 0;
    background: #fff;
    color: #000;
  }

  .w-head {
    width: 35px;
  }

  .w-a {
    width: 109px;
  }

  .w-b {
    width: 36px;
  }

  .w-c {
    width: 111px;
  }

  .w-d {
    width: 61px;
  }

  .w-e {
    width: 82px;
  }

  .w-f {
    width: 71px;
  }

  .w-g {
    width: 50px;
  }

  .w-h {
    width: 88px;
  }

  .w-i {
    width: 204px;
  }

  .w-j {
    width: 140px;
  }

  .sheet th {
    padding: 0;
    font: 14px/16px var(--mono);
    color: #27413e;
    background: #e4ecf7;
    border-right: 1px solid #9eb6ce;
    border-bottom: 1px solid #9eb6ce;
    vertical-align: bottom;
  }

  .sheet thead th {
    height: 19px;
    background: linear-gradient(#f8fafd, #d3dbe9);
  }

  .sheet thead th.picked {
    background: linear-gradient(#f8d28a, #f0bb5c);
    border-right-color: #f29536;
    border-bottom-color: #b08a60;
  }

  .sheet tbody th.picked {
    background: #ffd58d;
    border-color: #f29536;
  }

  .sheet thead th.corner {
    background: #a9c4e9;
    vertical-align: middle;
  }

  .corner svg {
    margin: 3px 3px 0 auto;
  }

  .sheet tbody tr {
    height: 30px;
  }

  .sheet tbody .tall {
    height: 49px;
  }

  .sheet tbody .mid {
    height: 33px;
  }

  .sheet td {
    padding: 0 2px;
    border-right: 1px solid #000;
    border-bottom: 1px solid #000;
  }

  .sheet .outside {
    border-color: #d0d7e5;
  }

  .sheet .process {
    text-align: center;
    font: 500 17px/20px 'Noto Sans CJK SC', sans-serif;
    color: #d80000;
  }

  .sheet .note {
    padding-bottom: 4px;
    font: bold 14px/16px 'Noto Sans CJK SC', sans-serif;
    color: #e00000;
    white-space: pre-line;
  }

  .latin {
    font-family: 'Liberation Mono', monospace;
    font-size: 13px;
    line-height: 1px;
  }

  .sheet .tail {
    padding-left: 170px;
  }

  .sheet .cursor {
    padding-bottom: 2px;
    outline: 2px solid #000;
    outline-offset: -1px;
  }

  .sheet .no {
    text-align: center;
    font: bold 18px/20px 'Liberation Serif', serif;
    color: #e00000;
  }

  .sheet .dark {
    color: #000;
  }

  .sheet .cam {
    padding-left: 22px;
    font: bold 14px/16px var(--mono);
  }

  .ref a {
    font: 16px/20px 'Noto Sans CJK SC', sans-serif;
    color: #d00000;
  }

  .highlight {
    position: absolute;
    left: 592px;
    top: 460px;
    width: 700px;
    height: 53px;
    border: 3px solid #f8f428;
    box-shadow: 2px 2px 4px #777, inset 2px 2px 4px #999;
    pointer-events: none;
  }

  .callout {
    position: absolute;
    left: 493px;
    top: 596px;
    width: 277px;
    height: 103px;
    padding: 2px 4px;
    border: 3px solid #0000c8;
    background: #fff;
    color: #e010e0;
    font: 500 25px/32px 'Noto Sans CJK SC', sans-serif;
  }

  .ime {
    position: absolute;
    left: 782px;
    bottom: 0;
    width: 185px;
    height: 21px;
    display: flex;
    align-items: center;
    gap: 7px;
    background: #fff;
    border: 1px solid #b8c4d8;
    border-bottom: 0;
    color: #2a72c4;
    font-weight: bold;
    font-size: 14px;
  }

  .sogou {
    margin: -5px -1px 0 -1px;
  }

  .tray {
    position: absolute;
    right: 0;
    bottom: 0;
    width: 78px;
    height: 22px;
    display: flex;
    align-items: center;
    justify-content: flex-end;
    gap: 9px;
    padding-right: 4px;
    background: linear-gradient(#8a9298, #4a5258 50%, #20282e);
    color: #fff;
  }

  .question {
    width: 14px;
    height: 14px;
    border-radius: 7px;
    background: #1a2fb0;
    text-align: center;
    font-weight: bold;
    line-height: 14px;
  }
</style>
